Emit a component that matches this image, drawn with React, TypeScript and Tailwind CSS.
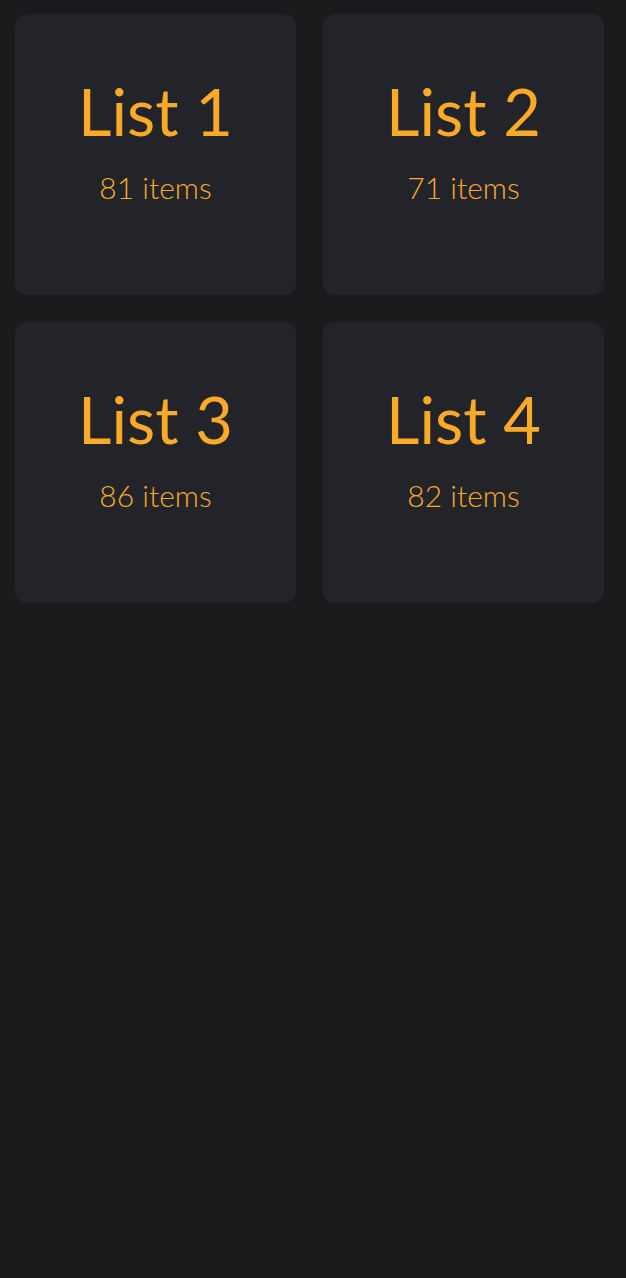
import React from 'react';

const lists = [
  { name: 'List 1', count: 81 },
  { name: 'List 2', count: 71 },
  { name: 'List 3', count: 86 },
  { name: 'List 4', count: 82 },
];

export default function App() {
  return (
    <div
      className="min-h-[1278px] w-full bg-[#1b1b1d] pl-[15px] pt-[14px]"
      style={{ fontFamily: 'Lato, "Open Sans", sans-serif' }}
    >
      <div className="grid grid-cols-[281px_281px] gap-x-[27px] gap-y-[27px]">
        {lists.map((list) => (
          <div
            key={list.name}
            className="flex h-[281px] flex-col items-center rounded-[12px] bg-[#232429] pt-[65px] text-[#fbaa27]"
          >
            <div className="text-[65px] leading-none">{list.name}</div>
            <div className="mt-[28px] text-[30px] font-light leading-none">{list.count} items</div>
          </div>
        ))}
      </div>
    </div>
  );
}
